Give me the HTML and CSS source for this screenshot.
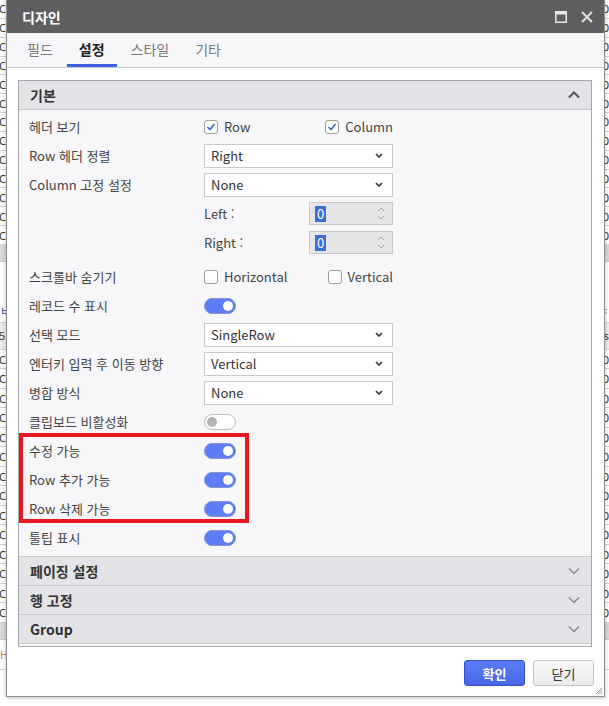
FILE: index.html
```html
<!DOCTYPE html>
<html lang="ko">
<head>
<meta charset="utf-8">
<title>디자인</title>
<link rel="stylesheet" href="styles.css">
</head>
<body>
<div class="grid">
  <div class="g-row"><span class="l">Co</span><span class="r">0</span></div>
  <div class="g-row"><span class="l">Co</span><span class="r">0</span></div>
  <div class="g-row"><span class="l">Co</span><span class="r">0</span></div>
  <div class="g-row"><span class="l">Co</span><span class="r">0</span></div>
  <div class="g-row"><span class="l">Co</span><span class="r">0</span></div>
  <div class="g-row"><span class="l">Co</span><span class="r">0</span></div>
  <div class="g-row"><span class="l">Co</span><span class="r">0</span></div>
  <div class="g-row"><span class="l">Co</span><span class="r">0</span></div>
  <div class="g-row"><span class="l">Co</span><span class="r">0</span></div>
  <div class="g-row"><span class="l">Co</span><span class="r">0</span></div>
  <div class="g-row"><span class="l">Co</span><span class="r">0</span></div>
  <div class="g-row"><span class="l">Co</span><span class="r">0</span></div>
  <div class="g-row"><span class="l">Co</span><span class="r">0</span></div>
  <div class="g-band"></div>
  <div class="g-gap"><span class="g-link">ㅂ</span><span class="g-warn">ㅊ</span></div>
  <div class="g-head"><span class="l">5</span><span class="r">s</span></div>
  <div class="g-row tall"><span class="l">Co</span><span class="r">0</span></div>
  <div class="g-row tall"><span class="l">Co</span><span class="r">0</span></div>
  <div class="g-row tall"><span class="l">Co</span><span class="r">0</span></div>
  <div class="g-row tall"><span class="l">Co</span><span class="r">0</span></div>
  <div class="g-row tall"><span class="l">Co</span><span class="r">0</span></div>
  <div class="g-row tall"><span class="l">Co</span><span class="r">0</span></div>
  <div class="g-row tall"><span class="l">Co</span><span class="r">0</span></div>
  <div class="g-row tall"><span class="l">Co</span><span class="r">0</span></div>
  <div class="g-row tall"><span class="l">Co</span><span class="r">0</span></div>
  <div class="g-row tall"><span class="l">Co</span><span class="r">0</span></div>
  <div class="g-row tall"><span class="l">Co</span><span class="r">0</span></div>
  <div class="g-row tall"><span class="l">Co</span><span class="r">0</span></div>
  <div class="g-row tall"><span class="l">Co</span><span class="r">0</span></div>
  <div class="g-row tall"><span class="l">Co</span><span class="r">0</span></div>
  <div class="g-band"></div>
  <div class="g-gap2"><span class="g-warn">H</span></div>
</div>

<div class="dialog">
  <div class="titlebar">
    <span class="title">디자인</span>
    <div class="tb-icons">
      <svg width="12" height="12" viewBox="0 0 12 12"><rect x="0.75" y="0.75" width="10.5" height="10.5" fill="none" stroke="#e6e6e6" stroke-width="1.5"/><rect x="0" y="0" width="12" height="3.5" fill="#e6e6e6"/></svg>
      <svg width="12" height="12" viewBox="0 0 12 12"><path d="M1 1 L11 11 M11 1 L1 11" stroke="#e6e6e6" stroke-width="1.8" fill="none"/></svg>
    </div>
  </div>
  <div class="tabs">
    <div class="tab">필드</div>
    <div class="tab active">설정</div>
    <div class="tab">스타일</div>
    <div class="tab">기타</div>
  </div>
  <div class="body">
    <div class="panel">
      <div class="sec-head first">
        <span>기본</span>
        <svg width="12" height="8" viewBox="0 0 12 8"><polyline points="1,6.5 6,1.5 11,6.5" fill="none" stroke="#555" stroke-width="2"/></svg>
      </div>
      <div class="settings">
        <div class="row">
          <span class="lbl">헤더 보기</span>
          <div class="pair">
            <label class="chk"><span class="box"><svg width="10" height="10" viewBox="0 0 10 10"><polyline points="1.5,5 4,7.5 8.5,2" fill="none" stroke="#3b5fd9" stroke-width="1.6"/></svg></span>Row</label>
            <label class="chk"><span class="box"><svg width="10" height="10" viewBox="0 0 10 10"><polyline points="1.5,5 4,7.5 8.5,2" fill="none" stroke="#3b5fd9" stroke-width="1.6"/></svg></span>Column</label>
          </div>
        </div>
        <div class="row">
          <span class="lbl">Row 헤더 정렬</span>
          <div class="sel"><span>Right</span><svg width="8" height="5" viewBox="0 0 8 5"><polyline points="1,1 4,4 7,1" fill="none" stroke="#333" stroke-width="1.6"/></svg></div>
        </div>
        <div class="row">
          <span class="lbl">Column 고정 설정</span>
          <div class="sel"><span>None</span><svg width="8" height="5" viewBox="0 0 8 5"><polyline points="1,1 4,4 7,1" fill="none" stroke="#333" stroke-width="1.6"/></svg></div>
        </div>
        <div class="row">
          <span class="lbl"></span>
          <div class="pair">
            <span class="sub">Left :</span>
            <div class="spin"><span class="val">0</span><svg width="8" height="15" viewBox="0 0 8 15"><polyline points="1,5 4,2 7,5" fill="none" stroke="#a0a0a0" stroke-width="1"/><polyline points="1,10 4,13 7,10" fill="none" stroke="#a0a0a0" stroke-width="1"/></svg></div>
          </div>
        </div>
        <div class="row">
          <span class="lbl"></span>
          <div class="pair">
            <span class="sub">Right :</span>
            <div class="spin"><span class="val">0</span><svg width="8" height="15" viewBox="0 0 8 15"><polyline points="1,5 4,2 7,5" fill="none" stroke="#a0a0a0" stroke-width="1"/><polyline points="1,10 4,13 7,10" fill="none" stroke="#a0a0a0" stroke-width="1"/></svg></div>
          </div>
        </div>
        <div class="row gap">
          <span class="lbl">스크롤바 숨기기</span>
          <div class="pair">
            <label class="chk"><span class="box"></span>Horizontal</label>
            <label class="chk"><span class="box"></span>Vertical</label>
          </div>
        </div>
        <div class="row">
          <span class="lbl">레코드 수 표시</span>
          <span class="toggle on"></span>
        </div>
        <div class="row">
          <span class="lbl">선택 모드</span>
          <div class="sel"><span>SingleRow</span><svg width="8" height="5" viewBox="0 0 8 5"><polyline points="1,1 4,4 7,1" fill="none" stroke="#333" stroke-width="1.6"/></svg></div>
        </div>
        <div class="row">
          <span class="lbl">엔터키 입력 후 이동 방향</span>
          <div class="sel"><span>Vertical</span><svg width="8" height="5" viewBox="0 0 8 5"><polyline points="1,1 4,4 7,1" fill="none" stroke="#333" stroke-width="1.6"/></svg></div>
        </div>
        <div class="row">
          <span class="lbl">병합 방식</span>
          <div class="sel"><span>None</span><svg width="8" height="5" viewBox="0 0 8 5"><polyline points="1,1 4,4 7,1" fill="none" stroke="#333" stroke-width="1.6"/></svg></div>
        </div>
        <div class="row">
          <span class="lbl">클립보드 비활성화</span>
          <span class="toggle"></span>
        </div>
        <div class="hl">
          <div class="row">
            <span class="lbl">수정 가능</span>
            <span class="toggle on"></span>
          </div>
          <div class="row">
            <span class="lbl">Row 추가 가능</span>
            <span class="toggle on"></span>
          </div>
          <div class="row">
            <span class="lbl">Row 삭제 가능</span>
            <span class="toggle on"></span>
          </div>
        </div>
        <div class="row">
          <span class="lbl">툴팁 표시</span>
          <span class="toggle on"></span>
        </div>
      </div>
      <div class="sec-head acc">
        <span>페이징 설정</span>
        <svg width="12" height="8" viewBox="0 0 12 8"><polyline points="1,1.5 6,6.5 11,1.5" fill="none" stroke="#8a8a8a" stroke-width="1.5"/></svg>
      </div>
      <div class="sec-head acc">
        <span>행 고정</span>
        <svg width="12" height="8" viewBox="0 0 12 8"><polyline points="1,1.5 6,6.5 11,1.5" fill="none" stroke="#8a8a8a" stroke-width="1.5"/></svg>
      </div>
      <div class="sec-head acc last">
        <span>Group</span>
        <svg width="12" height="8" viewBox="0 0 12 8"><polyline points="1,1.5 6,6.5 11,1.5" fill="none" stroke="#8a8a8a" stroke-width="1.5"/></svg>
      </div>
      <div class="panel-end"></div>
    </div>
  </div>
  <div class="footer">
    <button class="btn primary">확인</button>
    <button class="btn secondary">닫기</button>
    <svg class="grip" width="8" height="8" viewBox="0 0 8 8"><path d="M7 1 L1 7 M7 3.5 L3.5 7 M7 6 L6 7" stroke="#888" stroke-width="1" fill="none"/></svg>
  </div>
</div>
</body>
</html>
```

FILE: styles.css
```css
*, *::before, *::after { box-sizing: border-box; }
html, body { margin: 0; padding: 0; }
body {
  width: 609px;
  height: 706px;
  overflow: hidden;
  position: relative;
  background: #fff;
  font-family: "Noto Sans CJK KR", "Noto Sans", sans-serif;
  font-size: 13px;
  color: #444;
}

/* background grid behind the dialog */
.grid { width: 609px; }
.g-row {
  height: 18.85px;
  border-bottom: 1px solid #d2d2d2;
  display: flex;
  justify-content: space-between;
  align-items: center;
  font-family: "Noto Sans", sans-serif;
  font-size: 11px;
  color: #333;
  line-height: 1;
  overflow: hidden;
}
.g-row.tall { height: 19.5px; }
.g-row .l, .g-head .l { margin-left: -1px; }
.g-band { height: 17px; background: #d8d8d8; border-bottom: 1px solid #c8c8c8; }
.g-gap {
  height: 61px;
  display: flex;
  justify-content: space-between;
  align-items: flex-end;
  padding-bottom: 6px;
  border-bottom: 1px solid #d2d2d2;
  font-size: 11px;
  line-height: 1;
}
.g-gap2 {
  height: 30px;
  display: flex;
  align-items: center;
  border-bottom: 1px solid #d2d2d2;
  font-size: 11px;
  line-height: 1;
}
.g-link { color: #2344a8; }
.g-warn { color: #d08a10; }
.g-head {
  height: 27px;
  background: #ececec;
  border-bottom: 1px solid #d2d2d2;
  display: flex;
  justify-content: space-between;
  align-items: center;
  font-size: 11px;
  line-height: 1;
  color: #444;
}

/* dialog window */
.dialog {
  position: absolute;
  left: 6px;
  top: -1px;
  width: 599px;
  border: 1px solid #8e8e8e;
  background: #fff;
  box-shadow: 0 1px 4px rgba(0, 0, 0, 0.25);
  display: flex;
  flex-direction: column;
}
.titlebar {
  height: 33px;
  background: #5f5f61;
  color: #fff;
  display: flex;
  align-items: center;
  padding: 0 11px 0 15px;
  font-weight: 700;
  font-size: 14px;
}
.titlebar .title { flex: 1; }
.tb-icons { display: flex; align-items: center; gap: 14px; }
.tb-icons svg { display: block; }

.tabs {
  height: 35px;
  background: #f7f7f9;
  border-bottom: 1px solid #c9c9c9;
  display: flex;
  gap: 2px;
  padding-left: 8px;
}
.tab {
  padding: 1px 12px 0;
  display: flex;
  align-items: center;
  font-size: 14px;
  color: #7a7a7a;
  border-bottom: 3px solid transparent;
}
.tab.active {
  color: #222;
  font-weight: 700;
  border-bottom-color: #3d5fe6;
}

.body { padding: 12px 12px 0 11px; }
.panel {
  border: 1px solid #a8a8a8;
  background: #f7f7f9;
}
.sec-head {
  height: 29px;
  display: flex;
  align-items: center;
  justify-content: space-between;
  padding: 0 11px;
  background: #e4e4e8;
  font-weight: 700;
  font-size: 14px;
  color: #333;
}
.sec-head svg { display: block; }
.sec-head.first { border-bottom: 1px solid #c8c8c8; }
.sec-head.acc { border-top: 1px solid #c8c8c8; }
.sec-head.last { height: 30px; border-bottom: 1px solid #c8c8c8; }
.panel-end { height: 2px; }

.settings { padding: 2px 0 4px; }
.row {
  height: 29px;
  display: grid;
  grid-template-columns: 175px 189px;
  align-items: center;
  padding-left: 10px;
}
.row.gap { margin-top: 5px; }
.lbl { color: #444; white-space: nowrap; }
.pair { display: flex; justify-content: space-between; align-items: center; }
.chk { display: flex; align-items: center; gap: 6px; color: #444; }
.box {
  width: 14px;
  height: 14px;
  border: 1px solid #9c9c9c;
  border-radius: 3px;
  background: #fff;
  display: flex;
  align-items: center;
  justify-content: center;
}
.box svg { display: block; }
.sel {
  height: 24px;
  border: 1px solid #c8c8c8;
  background: #fff;
  display: flex;
  align-items: center;
  justify-content: space-between;
  padding: 0 9px 0 6px;
  color: #333;
}
.sel svg { display: block; }
.sub { color: #444; }
.spin {
  width: 84px;
  height: 23px;
  border: 1px solid #c8c8c8;
  background: #e6e6e8;
  display: flex;
  align-items: center;
  justify-content: space-between;
  padding: 0 7px 0 5px;
}
.spin .val {
  background: #3a6fd8;
  color: #fff;
  line-height: 16px;
  padding: 0 2px;
}
.spin svg { display: block; }

.toggle {
  position: relative;
  width: 32px;
  height: 16px;
  border-radius: 8px;
  border: 1px solid #b9b9b9;
  background: #fff;
}
.toggle::after {
  content: "";
  position: absolute;
  top: 2px;
  left: 2px;
  width: 10px;
  height: 10px;
  border-radius: 50%;
  background: #b4b4b4;
}
.toggle.on { background: #5d7df5; border-color: #8593cf; }
.toggle.on::after { left: auto; right: 2px; background: #fff; }

/* red highlight annotation */
.hl { position: relative; }
.hl::after {
  content: "";
  position: absolute;
  left: 0;
  top: -3px;
  width: 230px;
  height: 90px;
  border: 4px solid #e8161e;
  pointer-events: none;
}

.footer {
  position: relative;
  display: flex;
  justify-content: flex-end;
  gap: 8px;
  padding: 13px 10px 10px;
}
.btn {
  width: 61px;
  height: 26px;
  border-radius: 3px;
  font-family: "Noto Sans CJK KR", sans-serif;
  font-size: 13px;
  display: flex;
  align-items: center;
  justify-content: center;
  padding: 0;
}
.btn.primary {
  background: linear-gradient(#5c7cf6, #4767ea);
  border: 1px solid #3451c9;
  color: #fff;
  font-weight: 700;
}
.btn.secondary {
  background: linear-gradient(#f8f8f8, #ebebeb);
  border: 1px solid #c4c4c4;
  color: #333;
}
.grip { position: absolute; right: 1px; bottom: 1px; }
```
